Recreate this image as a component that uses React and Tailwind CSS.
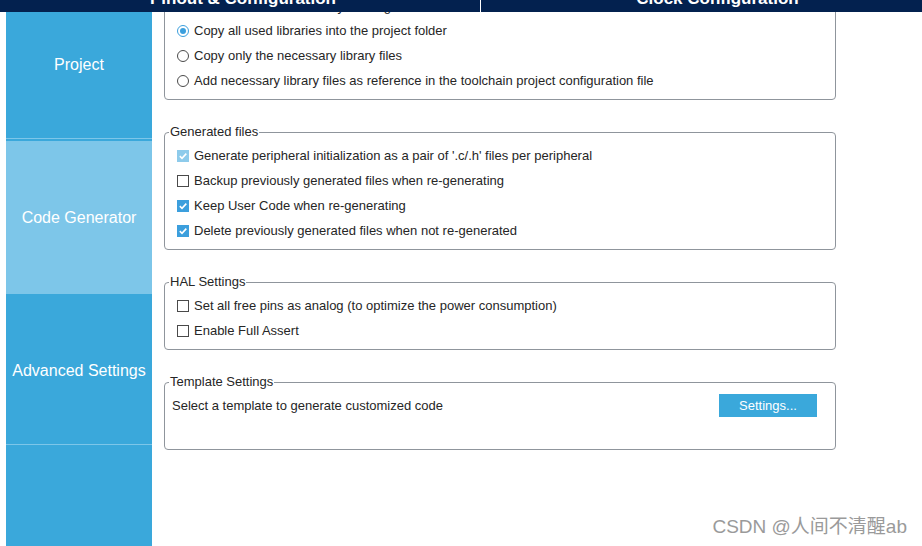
import React from "react";

const font = { fontFamily: '"Liberation Sans", Arial, sans-serif' };

function Radio({ checked }) {
  return (
    <span
      className={`flex h-[12px] w-[12px] shrink-0 items-center justify-center rounded-full border bg-white ${
        checked ? "border-[#3c9fdd]" : "border-[#4a4a4a]"
      }`}
    >
      {checked && <span className="h-[6px] w-[6px] rounded-full bg-[#3c9fdd]" />}
    </span>
  );
}

function Check({ checked, disabled }) {
  if (!checked) {
    return <span className="h-[12px] w-[12px] shrink-0 border border-[#4a4a4a] bg-white" />;
  }
  return (
    <span
      className={`flex h-[12px] w-[12px] shrink-0 items-center justify-center ${
        disabled ? "bg-[#8ecbeb]" : "bg-[#3c9fdd]"
      }`}
    >
      <svg width="10" height="10" viewBox="0 0 10 10">
        <path d="M1.8 5.2 L4 7.3 L8.3 2.6" fill="none" stroke="white" strokeWidth="1.6" />
      </svg>
    </span>
  );
}

function Option({ type, checked, disabled, children }) {
  return (
    <div className="flex h-[25px] items-center gap-[5px] pl-[8px]">
      {type === "radio" ? <Radio checked={checked} /> : <Check checked={checked} disabled={disabled} />}
      <span>{children}</span>
    </div>
  );
}

function Group({ title, className = "", children }) {
  return (
    <fieldset
      className={`w-[672px] rounded-[4px] border border-[#8f959c] pl-[4px] pr-[18px] pt-[3px] pb-[6px] ${className}`}
    >
      <legend className="px-[1px] leading-[16px]">{title}</legend>
      {children}
    </fieldset>
  );
}

export default function App() {
  return (
    <div className="relative h-[546px] w-[922px] overflow-hidden bg-white" style={font}>
      {/* Top tabs */}
      <div className="relative z-10 flex h-[12px] overflow-hidden bg-[#03214f] text-white">
        <div className="w-[481px] border-r border-white pl-[6px] text-center">
          <div className="-mt-[10px] text-[17px] font-bold leading-[17px]">Pinout &amp; Configuration</div>
        </div>
        <div className="flex-1 pl-[32px] text-center">
          <div className="-mt-[10px] text-[17px] font-bold leading-[17px]">Clock Configuration</div>
        </div>
      </div>

      <div className="flex h-[534px]">
        <div className="w-[6px]" />

        {/* Sidebar */}
        <div className="flex w-[146px] flex-col bg-[#3aa8db] text-[16px] text-white">
          <div className="h-[126px] pt-[45px] text-center leading-[16px]">Project</div>
          <div className="h-[1px] bg-[#7dc6e9]" />
          <div className="h-[2px]" />
          <div className="flex h-[153px] items-center justify-center bg-[#7dc6e9]">Code Generator</div>
          <div className="flex h-[150px] items-center justify-center pt-[3px]">Advanced Settings</div>
          <div className="h-[1px] bg-[#7dc6e9]" />
        </div>

        {/* Content */}
        <div className="flex flex-1 flex-col overflow-hidden pl-[12px] text-[13px] text-[#262626]">
          <Group title="STM32Cube Firmware Library Package" className="-mt-[13px]">
            <Option type="radio" checked>Copy all used libraries into the project folder</Option>
            <Option type="radio">Copy only the necessary library files</Option>
            <Option type="radio">Add necessary library files as reference in the toolchain project configuration file</Option>
          </Group>

          <Group title="Generated files" className="mt-[24px]">
            <Option type="check" checked disabled>Generate peripheral initialization as a pair of '.c/.h' files per peripheral</Option>
            <Option type="check">Backup previously generated files when re-generating</Option>
            <Option type="check" checked>Keep User Code when re-generating</Option>
            <Option type="check" checked>Delete previously generated files when not re-generated</Option>
          </Group>

          <Group title="HAL Settings" className="mt-[24px]">
            <Option type="check">Set all free pins as analog (to optimize the power consumption)</Option>
            <Option type="check">Enable Full Assert</Option>
          </Group>

          <Group title="Template Settings" className="mt-[24px] !pb-[31px]">
            <div className="flex h-[25px] items-center justify-between pl-[3px]">
              <span>Select a template to generate customized code</span>
              <button className="h-[23px] w-[98px] bg-[#3aa8db] text-[13px] text-white">Settings...</button>
            </div>
          </Group>
        </div>
      </div>

      {/* Watermark */}
      <div
        className="absolute bottom-[9px] right-[15px] text-[19px] leading-[20px] text-[#9a9a9a]"
        style={{ fontFamily: '"Liberation Sans", "Noto Sans CJK SC", sans-serif' }}
      >
        CSDN @人间不清醒ab
      </div>
    </div>
  );
}
